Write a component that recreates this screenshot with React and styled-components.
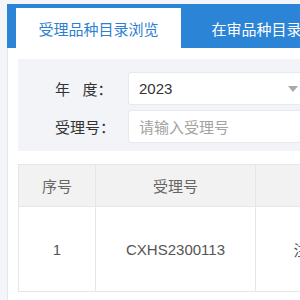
import styled, { createGlobalStyle } from "styled-components";

const Global = createGlobalStyle`
    html, body {
        margin: 0;
        padding: 0;
        background: #f4f5f8;
        font-family: "Liberation Sans", "Noto Sans CJK SC", sans-serif;
        overflow: hidden;
    }
`

export default function App() {
    return (
        <>
            <Global />
            <Page>
                <TabBar>
                    <Tab active>受理品种目录浏览</Tab>
                    <Tab>在审品种目录浏览</Tab>
                </TabBar>
                <Panel>
                    <Filter>
                        <Row>
                            <Label>年&nbsp;&nbsp;&nbsp;度：</Label>
                            <Field>
                                <span>2023</span>
                                <Arrow />
                            </Field>
                        </Row>
                        <Row>
                            <Label>受理号：</Label>
                            <Field placeholder>请输入受理号</Field>
                        </Row>
                    </Filter>
                    <Table>
                        <thead>
                            <tr>
                                <Th width={76}>序号</Th>
                                <Th width={159}>受理号</Th>
                                <Th width={150}>药品名称</Th>
                            </tr>
                        </thead>
                        <tbody>
                            <tr>
                                <Td>1</Td>
                                <Td>CXHS2300113</Td>
                                <Td>注射用药品</Td>
                            </tr>
                        </tbody>
                    </Table>
                </Panel>
            </Page>
        </>
    )
}

const Page = styled.div`
    width: 420px;
    height: 300px;
    padding: 4px 0 0 7px;
    box-sizing: border-box;
`

const TabBar = styled.div`
    display: flex;
    align-items: flex-end;
    height: 44px;
    background: #2c84d7;
    padding-left: 9px;
`

const Tab = styled.div`
    width: 165px;
    height: 40px;
    display: flex;
    align-items: center;
    justify-content: center;
    font-size: 15px;
    color: ${(props) => props.active ? "#2c7fd3" : "#ffffff"};
    background: ${(props) => props.active ? "#ffffff" : "transparent"};
    margin-right: 8px;
`

const Panel = styled.div`
    background: #ffffff;
    border-left: 1px solid #e3e6ec;
    height: 252px;
    padding: 11px 0 0 10px;
    box-sizing: border-box;
`

const Filter = styled.div`
    background: #f2f4f8;
    padding: 13px 0 8px 37px;
    display: flex;
    flex-direction: column;
    gap: 5px;
`

const Row = styled.div`
    display: flex;
    align-items: center;
`

const Label = styled.div`
    width: 55px;
    margin-right: 18px;
    font-size: 15px;
    color: #333333;
    white-space: nowrap;
`

const Field = styled.div`
    flex: 1;
    height: 33px;
    display: flex;
    align-items: center;
    justify-content: space-between;
    background: #ffffff;
    border: 1px solid #e6e9ef;
    border-right: none;
    border-radius: 3px 0 0 3px;
    padding: 0 122px 0 10px;
    box-sizing: border-box;
    font-size: 15px;
    color: ${(props) => props.placeholder ? "#a3a3a3" : "#333333"};
`

const Arrow = styled.i`
    width: 0;
    height: 0;
    border-left: 5px solid transparent;
    border-right: 5px solid transparent;
    border-top: 6px solid #a8a8a8;
`

const Table = styled.table`
    margin-top: 13px;
    border-collapse: collapse;
    table-layout: fixed;
`

const Th = styled.th`
    width: ${(props) => props.width}px;
    height: 41px;
    background: #f2f2f2;
    border: 1px solid #e6e6e6;
    font-weight: normal;
    font-size: 15px;
    color: #666666;
    padding: 0;
`

const Td = styled.td`
    height: 84px;
    border: 1px solid #e6e6e6;
    text-align: center;
    font-size: 15px;
    color: #555555;
    padding: 0;
    white-space: nowrap;
    overflow: hidden;
`
